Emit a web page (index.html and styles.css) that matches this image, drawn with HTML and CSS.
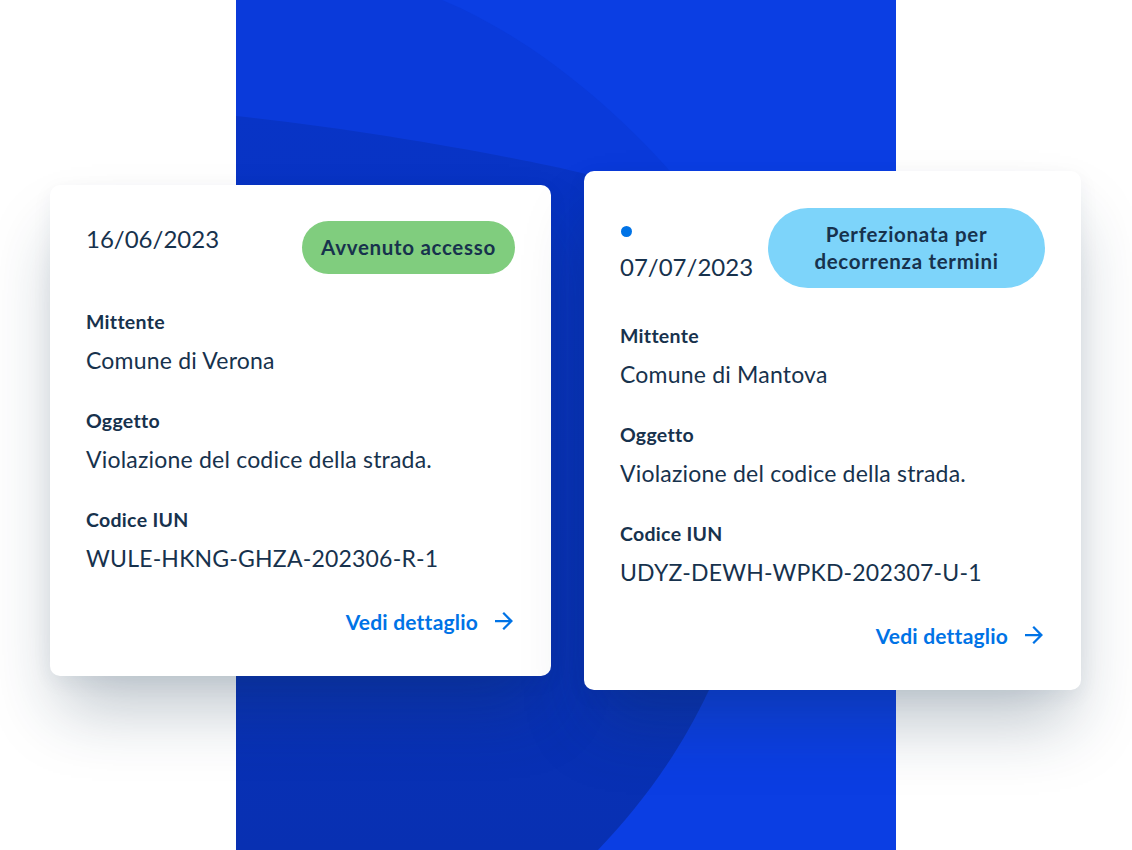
FILE: index.html
```html
<!DOCTYPE html>
<html lang="it">
<head>
<meta charset="utf-8">
<title>Notifiche</title>
<link rel="stylesheet" href="styles.css">
</head>
<body>
<div class="stage">
  <div class="panel">
    <svg width="660" height="850" viewBox="0 0 660 850" aria-hidden="true">
      <defs>
        <linearGradient id="dark" x1="0" y1="0" x2="0" y2="1">
          <stop offset="0" stop-color="#0834C6"/>
          <stop offset="1" stop-color="#0830B2"/>
        </linearGradient>
      </defs>
      <rect width="660" height="850" fill="#0B3EE3"/>
      <path d="M0,0 L206,0 C290,35 370,100 433,170 L520,300 L0,300 Z" fill="#0A3ADA"/>
      <path d="M0,116 C130,130 270,155 350,174 C470,260 530,520 473,690 C440,760 400,810 362,850 L0,850 Z" fill="url(#dark)"/>
    </svg>
  </div>
  <div class="cards">
    <article class="card card-a">
      <div class="card-head">
        <div class="when">
          <span class="date">16/06/2023</span>
        </div>
        <span class="chip chip-green">Avvenuto accesso</span>
      </div>
      <dl class="fields">
        <div class="field"><dt>Mittente</dt><dd>Comune di Verona</dd></div>
        <div class="field"><dt>Oggetto</dt><dd>Violazione del codice della strada.</dd></div>
        <div class="field"><dt>Codice IUN</dt><dd>WULE-HKNG-GHZA-202306-R-1</dd></div>
      </dl>
      <div class="card-foot">
        <a class="link" href="#">Vedi dettaglio
          <svg class="arrow" width="18" height="18" viewBox="4 4 16 16" aria-hidden="true"><path d="M12 4l-1.41 1.41L16.17 11H4v2h12.17l-5.58 5.59L12 20l8-8z" fill="currentColor"/></svg>
        </a>
      </div>
    </article>
    <article class="card card-b">
      <div class="card-head">
        <div class="when">
          <span class="dot"></span>
          <span class="date">07/07/2023</span>
        </div>
        <span class="chip chip-blue">Perfezionata per<br>decorrenza termini</span>
      </div>
      <dl class="fields">
        <div class="field"><dt>Mittente</dt><dd>Comune di Mantova</dd></div>
        <div class="field"><dt>Oggetto</dt><dd>Violazione del codice della strada.</dd></div>
        <div class="field"><dt>Codice IUN</dt><dd>UDYZ-DEWH-WPKD-202307-U-1</dd></div>
      </dl>
      <div class="card-foot">
        <a class="link" href="#">Vedi dettaglio
          <svg class="arrow" width="18" height="18" viewBox="4 4 16 16" aria-hidden="true"><path d="M12 4l-1.41 1.41L16.17 11H4v2h12.17l-5.58 5.59L12 20l8-8z" fill="currentColor"/></svg>
        </a>
      </div>
    </article>
  </div>
</div>
</body>
</html>
```
FILE: styles.css
```css
* { box-sizing: border-box; }

html, body {
  margin: 0;
  padding: 0;
  background: #ffffff;
}

body {
  font-family: "Lato", "Noto Sans", sans-serif;
  color: #17324D;
}

.stage {
  display: grid;
  width: 1132px;
  height: 850px;
  overflow: hidden;
}

.panel,
.cards {
  grid-area: 1 / 1;
}

.panel {
  margin-left: 236px;
  width: 660px;
  height: 850px;
}

.panel svg {
  display: block;
}

.cards {
  display: flex;
  align-items: flex-start;
  gap: 33px;
  padding-left: 50px;
}

.card {
  background: #ffffff;
  border-radius: 10px;
  padding: 36px 36px 40px;
  box-shadow: 0 42px 64px -10px rgba(23, 50, 77, 0.28), 0 6px 20px rgba(23, 50, 77, 0.06);
}

.card-a {
  width: 501px;
  margin-top: 185px;
}

.card-b {
  width: 497px;
  margin-top: 171px;
  padding-top: 37px;
}

.card-head {
  display: flex;
  justify-content: space-between;
  align-items: flex-start;
}

.when {
  display: flex;
  flex-direction: column;
  align-items: flex-start;
}

.dot {
  display: block;
  width: 11px;
  height: 11px;
  border-radius: 50%;
  background: #0073E6;
  margin: 18px 0 12px 1px;
}

.date {
  display: block;
  font-size: 24px;
  line-height: 32px;
  margin-top: 2px;
}

.chip {
  display: block;
  font-size: 20.5px;
  font-weight: 700;
  line-height: 27px;
  padding: 13px 0;
  border-radius: 40px;
  text-align: center;
  letter-spacing: 0.7px;
  color: #17324D;
}

.chip-green {
  width: 213px;
  background: #80CD7E;
}

.chip-blue {
  width: 277px;
  background: #7DD4FA;
}

.fields {
  margin: 36px 0 0;
  display: flex;
  flex-direction: column;
  gap: 34px;
}

.field dt {
  font-size: 19.5px;
  font-weight: 700;
  line-height: 24px;
  letter-spacing: 0.3px;
}

.field dd {
  margin: 11px 0 0;
  font-size: 23px;
  line-height: 30px;
  letter-spacing: 0.2px;
}

.card-foot {
  display: flex;
  justify-content: flex-end;
  margin-top: 35px;
}

.link {
  display: flex;
  align-items: center;
  gap: 17px;
  color: #0073E6;
  font-size: 21px;
  font-weight: 700;
  line-height: 28px;
  letter-spacing: 0.2px;
  text-decoration: none;
  padding-right: 2px;
}

.arrow {
  display: block;
  margin-top: -2px;
}
```
